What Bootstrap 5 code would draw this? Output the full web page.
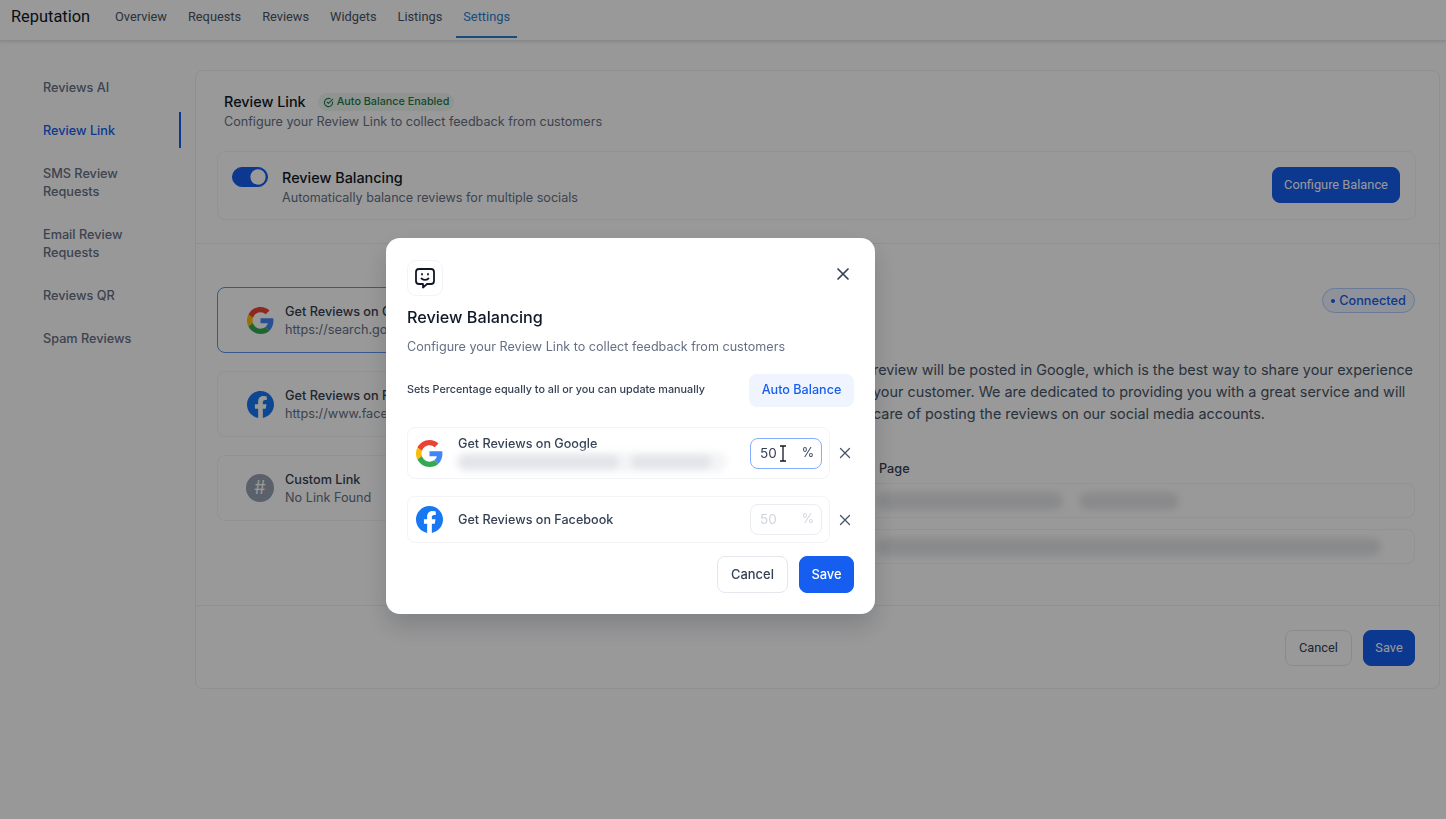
<!DOCTYPE html>
<html lang="en">
<head>
    <meta charset="utf-8">
    <meta name="viewport" content="width=device-width, initial-scale=1.0">
    <title>Reputation - Review Link</title>
    <link href="https://cdn.jsdelivr.net/npm/bootstrap@5.3.0/dist/css/bootstrap.min.css" rel="stylesheet">
    <style>
        html, body { height: 100%; overflow: hidden; }
        body { font-family: Inter, "Liberation Sans", sans-serif; font-size: 12.6px; color: #101828; background: #fdfdfd; }

        .top-bar { height: 41px; background: #fff; border-bottom: 1px solid #e4e7ec; box-shadow: 0 1px 3px rgba(16,24,40,.12); padding-left: 11px; }
        .brand-name { font-family: Roboto, sans-serif; font-size: 16.4px; font-weight: 400; color: #101828; margin-right: 18px; margin-top: -5px; }
        .top-link { font-family: Roboto, Inter, sans-serif; font-size: 12.8px; font-weight: 400; color: #475467; padding: 0 7px; height: 38px; line-height: 34px; text-decoration: none; margin-right: 7px; display: block; margin-top: -3px; }
        .top-link.active { color: #2e7dd1; border-bottom: 2px solid #2e7dd1; }

        .side-nav { width: 181px; margin-top: 38px; flex-shrink: 0; margin-right: 14px; padding-left: 43px; }
        .side-link { display: block; font-size: 12.7px; font-weight: 500; color: #667085; line-height: 18px; margin-bottom: 25.1px; text-decoration: none; width: 100%; }
        .side-link.active { color: #155eef; position: relative; }
        .side-link.active::after { content: ""; position: absolute; right: 0; top: -10px; bottom: -8px; width: 2px; background: #155eef; }

        .main-panel { width: 1245px; height: 619px; margin-top: 29px; border: 1px solid #eceef1; border-radius: 8px; background: #fff; flex-shrink: 0; }
        .panel-top { padding: 21px 23px 0 28px; height: 173px; border-bottom: 1px solid #eef0f3; }
        .sec-title { font-size: 14.4px; font-weight: 500; line-height: 20px; }
        .ok-chip { height: 18px; background: #eff7f1; color: #1f7a4d; border-radius: 9px; font-size: 10.8px; font-weight: 500; padding: 0 5px; gap: 3px; margin-left: 12px; }
        .sub-text { color: #667085; line-height: 18px; padding-top: 1px; }
        .balance-box { margin-top: 20px; margin-left: -7px; height: 69px; border: 1px solid #f4f5f7; border-radius: 8px; padding: 0 15px 0 14px; }
        .switch-wrap { margin-bottom: 14px; }
        .balance-box .form-switch .form-check-input { width: 36px; height: 20px; margin: 0 14px 0 0; background-color: #155eef; border-color: #155eef; background-image: url("data:image/svg+xml,%3csvg xmlns='http://www.w3.org/2000/svg' viewBox='-4 -4 8 8'%3e%3ccircle r='3.4' fill='%23fff'/%3e%3c/svg%3e"); }
        .balance-title { font-size: 14.4px; font-weight: 500; line-height: 20px; }
        .balance-copy { padding-top: 3px; }
        .btn-blue { background: #155eef; border: 1px solid #155eef; color: #fff; font-size: 12.5px; font-weight: 500; border-radius: 8px; }
        .btn-blue:hover { background: #155eef; color: #fff; }
        .btn-line { background: #fff; border: 1px solid #e4e7ec; color: #344054; font-size: 12.5px; font-weight: 500; border-radius: 8px; }
        .btn.roboto-btn { font-family: Roboto, Inter, sans-serif; font-size: 12.8px; font-weight: 400; }
        .btn.config-btn { height: 36px; width: 128px; padding: 0; margin-top: -2px; }

        .panel-mid { height: 362px; border-bottom: 1px solid #eef0f3; padding: 43px 24px 0 21px; }
        .source-col { width: 400px; flex-shrink: 0; }
        .source-item { height: 66px; border: 1px solid #f2f4f7; border-radius: 8px; margin-bottom: 18px; padding-left: 29px; gap: 11px; }
        .source-item.picked { border-color: #5f93f0; }
        .source-copy { padding-top: 1px; white-space: nowrap; }
        .source-name { font-size: 12.7px; font-weight: 500; color: #344054; line-height: 18px; }
        .source-url { font-size: 12.7px; color: #667085; line-height: 18px; }
        .hash-dot { width: 28px; height: 28px; margin-left: -1px; border-radius: 50%; background: #98a2b3; color: #fff; font-size: 18px; line-height: 28px; text-align: center; }
        .link-col { flex-grow: 1; min-width: 0; }
        .conn-chip { width: 93px; height: 25px; margin-top: 1px; border: 1px solid #b2ccff; background: #eff4ff; color: #155eef; border-radius: 13px; font-size: 12.7px; font-weight: 500; gap: 4px; margin-left: auto; }
        .conn-dot { width: 4px; height: 4px; border-radius: 50%; background: #155eef; }
        .long-text { font-size: 14.4px; line-height: 22px; color: #475467; margin: 46px 0 0 256px; white-space: nowrap; }
        .page-label { font-size: 12.7px; font-weight: 500; color: #344054; margin: 35px 0 5px 262px; line-height: 18px; }
        .fake-field { height: 35px; border: 1px solid #f2f4f7; border-radius: 8px; margin-bottom: 11px; padding-left: 258px; }
        .smudge { display: block; height: 18px; border-radius: 9px; background: #e6e7e9; filter: blur(3.500px); }

        .panel-foot { padding: 24px 24px 0 0; gap: 11px; }
        .panel-foot .btn { height: 36px; padding: 0; }

        .modal-backdrop.show { opacity: .4; }
        .balance-dialog { width: 489px; max-width: 489px; margin: 238px 0 0 386px; }
        .balance-dialog .modal-content { border: 0; border-radius: 14px; height: 376px; padding: 22px 21px 0 21px; box-shadow: 0 12px 24px rgba(16,24,40,.18); }
        .icon-tile { width: 36px; height: 36px; border: 1px solid #f2f4f7; border-radius: 9px; }
        .close-x { background: none; border: 0; padding: 0; width: 16px; height: 16px; line-height: 0; margin: 6px 3px 0 0; }
        .dlg-title { font-size: 16.2px; font-weight: 500; line-height: 24px; margin: 9px 0 0; color: #101828; }
        .dlg-sub { color: #667085; line-height: 18px; margin: 9px 0 0; }
        .dlg-hint { font-size: 10.8px; font-weight: 500; color: #344054; }
        .auto-btn { width: 105px; height: 33px; padding: 0; background: #eff4ff; border: 0; color: #155eef; font-size: 12.6px; font-weight: 500; border-radius: 8px; }
        .share-row { margin-top: 17px; }
        .share-card { width: 423px; flex-shrink: 0; border: 1px solid #f2f4f7; border-radius: 8px; padding: 0 7px 0 8px; }
        .share-name { font-weight: 500; color: #344054; line-height: 16px; }
        .share-copy { padding-top: 2px; }
        .blur-haze { width: 272px; height: 20px; margin-left: -3px; padding: 3px 4px; gap: 12px; background: #f3f4f6; border-radius: 10px; filter: blur(3.500px); }
        .blur-haze i { display: block; height: 14px; border-radius: 7px; background: #e2e4e8; }
        .pct-box { width: 72px; height: 31px; border: 1px solid #84adff; border-radius: 8px; padding: 0 7px 0 9px; color: #344054; font-size: 13.500px; position: relative; }
        .pct-box.off { border-color: #eaecf0; color: #d0d5dd; }
        .pct-sign { font-size: 12.6px; }
        .text-cursor { position: absolute; left: 27px; top: 6px; }
        .row-x { width: 30px; height: 30px; background: none; border: 0; padding: 0; flex-shrink: 0; margin-right: -6px; }
        .dlg-foot { margin-top: 13px; gap: 11px; }
        .dlg-foot .btn { height: 37px; padding: 0; font-size: 12.9px; }
    </style>
</head>
<body>
    <nav class="top-bar d-flex align-items-center">
        <span class="brand-name">Reputation</span>
        <a class="top-link" href="#">Overview</a>
        <a class="top-link" href="#">Requests</a>
        <a class="top-link" href="#">Reviews</a>
        <a class="top-link" href="#">Widgets</a>
        <a class="top-link" href="#">Listings</a>
        <a class="top-link active" href="#">Settings</a>
    </nav>

    <div class="d-flex">
        <div class="side-nav">
            <a class="side-link" href="#">Reviews AI</a>
            <a class="side-link active" href="#">Review Link</a>
            <a class="side-link" href="#">SMS Review<br>Requests</a>
            <a class="side-link" href="#">Email Review<br>Requests</a>
            <a class="side-link" href="#">Reviews QR</a>
            <a class="side-link" href="#">Spam Reviews</a>
        </div>

        <div class="main-panel">
            <div class="panel-top">
                <div class="d-flex align-items-center">
                    <span class="sec-title">Review Link</span>
                    <span class="ok-chip d-inline-flex align-items-center">
                        <svg width="11" height="11" viewBox="0 0 24 24" fill="none" stroke="currentColor" stroke-width="2.4" stroke-linecap="round" stroke-linejoin="round"><path d="M21 11v1a9 9 0 1 1-5.3-8.2"/><path d="M21 5 12 14l-3-3"/></svg>
                        Auto Balance Enabled
                    </span>
                </div>
                <div class="sub-text">Configure your Review Link to collect feedback from customers</div>

                <div class="balance-box d-flex align-items-center">
                    <div class="form-check form-switch switch-wrap p-0 d-flex">
                        <input class="form-check-input" type="checkbox" role="switch" checked>
                    </div>
                    <div class="flex-grow-1 balance-copy">
                        <div class="balance-title">Review Balancing</div>
                        <div class="sub-text">Automatically balance reviews for multiple socials</div>
                    </div>
                    <button class="btn btn-blue roboto-btn config-btn">Configure Balance</button>
                </div>
            </div>

            <div class="panel-mid d-flex">
                <div class="source-col">
                    <div class="source-item picked d-flex align-items-center">
                        <svg width="27" height="27" viewBox="0 0 48 48"><path fill="#EA4335" d="M24 9.5c3.500 0 6.700 1.200 9.200 3.600l6.900-6.900C35.900 2.400 30.500 0 24 0 14.600 0 6.500 5.400 2.600 13.200l8 6.200C12.400 13.700 17.700 9.500 24 9.500z"/><path fill="#4285F4" d="M46.980 24.550c0-1.570-.15-3.090-.38-4.550H24v9.020h12.940c-.58 2.960-2.260 5.480-4.780 7.180l7.730 6c4.510-4.180 7.090-10.360 7.090-17.650z"/><path fill="#FBBC05" d="M10.530 28.590c-.48-1.450-.76-2.990-.76-4.590s.27-3.140.76-4.590l-7.980-6.190C.92 16.460 0 20.120 0 24c0 3.880.92 7.540 2.560 10.780l7.970-6.190z"/><path fill="#34A853" d="M24 48c6.480 0 11.930-2.130 15.890-5.810l-7.730-6c-2.150 1.450-4.920 2.300-8.160 2.300-6.260 0-11.570-4.220-13.470-9.910l-7.980 6.190C6.510 42.620 14.620 48 24 48z"/></svg>
                        <div class="source-copy">
                            <div class="source-name">Get Reviews on Google</div>
                            <div class="source-url">https://search.google.com</div>
                        </div>
                    </div>
                    <div class="source-item d-flex align-items-center">
                        <svg width="27" height="27" viewBox="0 0 24 24"><path fill="#1877F2" d="M24 12.070C24 5.400 18.630 0 12 0S0 5.400 0 12.070c0 6.030 4.390 11.020 10.130 11.930v-8.440H7.080v-3.490h3.050V9.410c0-3.020 1.790-4.690 4.530-4.690 1.310 0 2.690.23 2.690.23v2.970h-1.510c-1.490 0-1.960.93-1.960 1.880v2.270h3.330l-.53 3.490h-2.800V24C19.610 23.090 24 18.100 24 12.070z"/><path fill="#fff" d="M16.670 15.560l.53-3.490h-3.330V9.800c0-.95.470-1.880 1.960-1.880h1.510V4.950s-1.380-.23-2.690-.23c-2.740 0-4.530 1.670-4.530 4.690v2.660H7.080v3.490h3.050V24a12.100 12.100 0 0 0 3.740 0v-8.440h2.800z"/></svg>
                        <div class="source-copy">
                            <div class="source-name">Get Reviews on Facebook</div>
                            <div class="source-url">https://www.facebook.com</div>
                        </div>
                    </div>
                    <div class="source-item d-flex align-items-center">
                        <div class="hash-dot">#</div>
                        <div class="source-copy">
                            <div class="source-name">Custom Link</div>
                            <div class="source-url">No Link Found</div>
                        </div>
                    </div>
                </div>
                <div class="link-col">
                    <div class="conn-chip d-flex align-items-center justify-content-center"><span class="conn-dot"></span>Connected</div>
                    <div class="long-text">review will be posted in Google, which is the best way to share your experience<br>your customer. We are dedicated to providing you with a great service and will<br>care of posting the reviews on our social media accounts.</div>
                    <div class="page-label">Page</div>
                    <div class="fake-field d-flex align-items-center gap-3">
                        <span class="smudge" style="width:187px"></span>
                        <span class="smudge" style="width:100px"></span>
                    </div>
                    <div class="fake-field d-flex align-items-center">
                        <span class="smudge" style="width:505px"></span>
                    </div>
                </div>
            </div>

            <div class="panel-foot d-flex justify-content-end">
                <button class="btn btn-line roboto-btn" style="width:67px">Cancel</button>
                <button class="btn btn-blue roboto-btn" style="width:52px">Save</button>
            </div>
        </div>
    </div>

    <div class="modal-backdrop show"></div>
    <div class="modal d-block" tabindex="-1">
        <div class="modal-dialog balance-dialog">
            <div class="modal-content">
                <div class="d-flex justify-content-between align-items-start">
                    <div class="icon-tile d-flex align-items-center justify-content-center">
                        <svg width="24" height="24" viewBox="0 0 24 24" fill="none" stroke="#101828" stroke-width="1.800" stroke-linecap="round" stroke-linejoin="round"><path d="M6 3h12a3 3 0 0 1 3 3v9a3 3 0 0 1-3 3h-4l-4 3.500V18H6a3 3 0 0 1-3-3V6a3 3 0 0 1 3-3z"/><path d="M9 8v.5M15 8v.5"/><path d="M8.500 12.500c2 1.600 5 1.600 7 0"/></svg>
                    </div>
                    <button class="close-x" aria-label="Close">
                        <svg width="16" height="16" viewBox="0 0 16 16" fill="none" stroke="#344054" stroke-width="1.700" stroke-linecap="round"><path d="M3 3l10 10M13 3 3 13"/></svg>
                    </button>
                </div>
                <h5 class="dlg-title">Review Balancing</h5>
                <p class="dlg-sub">Configure your Review Link to collect feedback from customers</p>

                <div class="d-flex justify-content-between align-items-center" style="margin-top:18px">
                    <span class="dlg-hint">Sets Percentage equally to all or you can update manually</span>
                    <button class="btn auto-btn">Auto Balance</button>
                </div>

                <div class="share-row d-flex align-items-center" style="margin-top:20px">
                    <div class="share-card d-flex align-items-center" style="height:52px">
                        <svg width="27" height="27" viewBox="0 0 48 48" class="flex-shrink-0" style="margin-right:15px"><path fill="#EA4335" d="M24 9.500c3.500 0 6.700 1.200 9.200 3.600l6.900-6.900C35.900 2.400 30.500 0 24 0 14.600 0 6.500 5.400 2.600 13.200l8 6.200C12.400 13.700 17.700 9.500 24 9.500z"/><path fill="#4285F4" d="M46.980 24.550c0-1.570-.15-3.090-.38-4.550H24v9.020h12.940c-.58 2.960-2.260 5.480-4.780 7.180l7.730 6c4.510-4.180 7.090-10.360 7.090-17.650z"/><path fill="#FBBC05" d="M10.530 28.590c-.48-1.450-.76-2.990-.76-4.590s.27-3.140.76-4.590l-7.980-6.190C.92 16.460 0 20.120 0 24c0 3.880.92 7.540 2.560 10.780l7.970-6.190z"/><path fill="#34A853" d="M24 48c6.480 0 11.930-2.130 15.890-5.810l-7.730-6c-2.150 1.450-4.920 2.300-8.160 2.300-6.260 0-11.570-4.220-13.470-9.910l-7.980 6.190C6.510 42.620 14.620 48 24 48z"/></svg>
                        <div class="flex-grow-1 share-copy">
                            <div class="share-name">Get Reviews on Google</div>
                            <div class="blur-haze d-flex">
                                <i style="width:160px"></i>
                                <i style="width:80px"></i>
                            </div>
                        </div>
                        <div class="pct-box d-flex align-items-center justify-content-between flex-shrink-0">
                            <span>50</span><span class="pct-sign">%</span>
                            <svg class="text-cursor" width="10" height="17" viewBox="0 0 10 17" fill="none" stroke="#101828" stroke-width="1.300"><path d="M2 1h6M2 16h6M5 1v15"/></svg>
                        </div>
                    </div>
                    <button class="row-x" aria-label="Remove">
                        <svg width="14" height="14" viewBox="0 0 14 14" fill="none" stroke="#475467" stroke-width="1.300" stroke-linecap="round"><path d="M2.500 2.500l9 9M11.500 2.500l-9 9"/></svg>
                    </button>
                </div>
                <div class="share-row d-flex align-items-center">
                    <div class="share-card d-flex align-items-center" style="height:47px">
                        <svg width="27" height="27" viewBox="0 0 24 24" class="flex-shrink-0" style="margin-right:15px"><path fill="#1877F2" d="M24 12.070C24 5.400 18.630 0 12 0S0 5.400 0 12.070c0 6.030 4.390 11.020 10.130 11.930v-8.440H7.080v-3.490h3.050V9.410c0-3.020 1.790-4.690 4.530-4.690 1.310 0 2.690.23 2.690.23v2.970h-1.510c-1.490 0-1.960.93-1.960 1.880v2.270h3.330l-.53 3.490h-2.800V24C19.610 23.090 24 18.100 24 12.070z"/><path fill="#fff" d="M16.670 15.560l.53-3.490h-3.330V9.800c0-.95.470-1.880 1.960-1.880h1.510V4.950s-1.380-.23-2.690-.23c-2.740 0-4.530 1.670-4.530 4.690v2.660H7.080v3.490h3.050V24a12.100 12.100 0 0 0 3.740 0v-8.440h2.800z"/></svg>
                        <div class="flex-grow-1 share-name">Get Reviews on Facebook</div>
                        <div class="pct-box off d-flex align-items-center justify-content-between flex-shrink-0">
                            <span>50</span><span class="pct-sign">%</span>
                        </div>
                    </div>
                    <button class="row-x" aria-label="Remove">
                        <svg width="14" height="14" viewBox="0 0 14 14" fill="none" stroke="#475467" stroke-width="1.300" stroke-linecap="round"><path d="M2.500 2.500l9 9M11.500 2.500l-9 9"/></svg>
                    </button>
                </div>

                <div class="dlg-foot d-flex justify-content-end">
                    <button class="btn btn-line" style="width:71px">Cancel</button>
                    <button class="btn btn-blue" style="width:55px">Save</button>
                </div>
            </div>
        </div>
    </div>

    <script src="https://cdn.jsdelivr.net/npm/bootstrap@5.3.0/dist/js/bootstrap.bundle.min.js"></script>
</body>
</html>
